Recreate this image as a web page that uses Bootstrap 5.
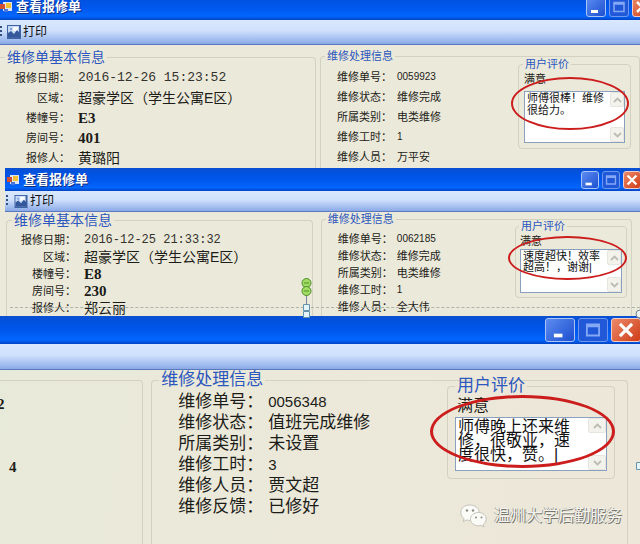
<!DOCTYPE html>
<html lang="zh-CN">
<head>
<meta charset="utf-8">
<meta name="viewport" content="width=device-width, initial-scale=1">
<title>查看报修单</title>
<link href="https://cdn.jsdelivr.net/npm/bootstrap@5.3.0/dist/css/bootstrap.min.css" rel="stylesheet">
<style>
body{font-family:"Liberation Sans","Noto Sans CJK SC",sans-serif;background:#ebe9da;color:#1c1c18;overflow-x:hidden}
.win{--fs:11px;--pitch:20px;--lg:14px;--btn:20px;background:#ebe9da;font-size:var(--fs);line-height:16px}
.titlebar{background:linear-gradient(#0a4fd0 0,#0053e2 25%,#0058ee 55%,#0366ff 85%,#0044c4 100%);color:#fff;font-size:13px;line-height:14px;font-weight:700}
.title-text{font-size:13px;font-weight:700;line-height:14px;text-shadow:1px 1px #0a2a80}
.ctl{width:var(--btn);height:var(--btnh,var(--btn));padding:0;border:1px solid #a9c4f8;border-radius:3px;background:linear-gradient(135deg,#5d8cf0,#1c4fd0);display:block}
.ctl svg{display:block;width:100%;height:100%}
.ctl.dim{background:#2158d8;border-color:#6d97ee}
.ctl.shut{background:linear-gradient(135deg,#ec8a6a,#cf3d17);border-color:#f3cdc4}
.tools{background:linear-gradient(#d9e8fe 0,#cfe0fc 45%,#9db9ee 85%,#8aa9e6 100%);border-bottom:1px solid #5a78bd}
.tool{padding:0;border:0;background:none;font-size:12px;line-height:16px;color:#111;gap:2px}
.grip{width:2px;height:12px;background:repeating-linear-gradient(#35507f 0 2px,transparent 2px 4px)}
.group{border:1px solid #d3d1c1;border-radius:4px;min-width:0;margin:0;padding:0}
.group.open-end{border-bottom:0;border-radius:4px 4px 0 0}
.group>legend{float:none;width:auto;margin:0 0 0 4px;padding:0 2px;font-size:var(--fs);line-height:var(--lg);color:#2d57bd}
.group>.big{font-size:14px;line-height:16px}
.pair{display:flex;height:var(--pitch);align-items:center;white-space:nowrap}
.pair dt{font-weight:400;flex:none;width:var(--key)}
.pair dd{margin:0}
.basic dt{text-align:right;margin-right:8px}
.stamp{font:13px/16px "Liberation Mono","Noto Sans CJK SC",monospace;color:#33332e}
.place{font-size:14px}
.code{font:bold 15px/16px "Liberation Serif",serif}
.num{font-size:var(--num,10px)}
.rating{margin-top:var(--lift)!important;padding:0 var(--in) var(--in)!important;width:var(--rw);flex:none;align-self:flex-start}
.rating>legend{margin-left:-1px}
.note{background:#fff;border:1px solid #8ba0bd;height:var(--nh)}
.note textarea{border:0;resize:none;outline:0;padding:var(--np,0) 0 0 2px;background:none;overflow:hidden;white-space:pre;font-size:var(--nf,var(--fs));line-height:var(--nl);width:0;flex:1;color:#111;font-family:inherit}
.arrow{border:1px solid #e6e5de;background:#f3f2ec;border-radius:2px;padding:0;width:var(--aw);height:15px;line-height:0}
.arrow svg{width:9px;height:6px}
.ring{position:absolute;left:var(--rl);right:var(--rr);top:var(--rt);bottom:var(--rb);border:var(--rs,2px) solid #cc1d1d;border-radius:50%;pointer-events:none}
.w1{--key:60px;--lift:-6px;--in:5px;--rw:113px;--nh:52px;--nl:12px;--aw:14px;--rl:-14px;--rr:-5px;--rt:-15px;--rb:12px}
.w1 .titlebar{margin-top:-6px;height:26px}
.w1 .winctl{margin-right:-12px;gap:3px}
.w1 .tools{height:25px;gap:5px}
.w1 .basic{--key:73px;padding-top:3px}
.w1 .left{margin-left:-4px}.w1 .left>legend{margin-left:8px}
.w2{--key:59px;--pitch:17px;--lift:-7px;--in:4px;--rw:112px;--nh:44px;--nl:11px;--np:1px;--aw:14px;--rl:-13px;--rr:-6px;--rt:-14px;--rb:12px;--btn:18px;margin-left:5px}
.w2 .titlebar{height:23px;padding-left:2px}
.w2 .winctl{margin-right:-1px;gap:3px}
.w2 .tools{height:21px;gap:6px;padding-left:1px}
.w2 .basic{--key:69px;padding-top:3px}
.w2 .stamp{font-size:12px}
.w2 .left{margin-left:1px}.w2 .left>legend{margin-left:5px}
.w2 .right{width:49%;margin-right:8px}
.w3{--fs:17px;--num:15px;--key:90px;--pitch:21px;--lg:16px;--lift:-10px;--in:7px;--rw:168px;--nh:54px;--nf:16px;--nl:14px;--np:2px;--aw:18px;--rl:-26px;--rr:-9px;--rt:-23px;--rb:2px;--rs:3px;--btn:30px;--btnh:24px;background:linear-gradient(100deg,#e8ead9,#ece8da 60%,#ece7d8)}
.w3 .titlebar{height:28px}
.w3 .winctl{margin-right:-1px;gap:3px}
.w3 .tools{height:26px}
.w3 .left{width:23%;margin:10px 0 0 -4px;padding-top:12px}
.w3 .right{margin:2px 12px 0 8px}
.w3 .right>legend{margin-left:7px}
.w3 .right dl{padding-left:26px;padding-top:3px}
.w3 .rating>legend{margin-left:0}
.w3 .rating{margin-right:12px}
.w3 .verdict{padding:3px 0 2px 2px;font-size:16px;line-height:18px}
.over{position:absolute;pointer-events:none}
.dash{left:5px;right:0;bottom:8px;border-top:1px dashed #aeb3ab}
.brand{position:absolute;right:18px;bottom:16px;gap:7px;font-size:16px;line-height:24px;color:#f4f3ee;text-shadow:1px 1px #77776f,-1px 0 #a3a39b}
.anchors{left:300px;top:-39px}
.knob{top:-8px}
.edge{top:146px}
</style>
<script src="https://cdn.jsdelivr.net/npm/bootstrap@5.3.0/dist/js/bootstrap.bundle.min.js"></script>
</head>
<body>
<svg width="0" height="0" class="position-absolute" aria-hidden="true">
<defs>
<symbol id="app" viewBox="0 0 12 12"><path fill="#dfe6f3" d="M3 1h9v9H3z"/><path fill="#d2502e" d="M0 3h5v5H0z"/><path fill="#f3c136" d="M6 2h5v5H6z"/><path fill="#4b77d6" d="M4 8h4v3H4z"/></symbol>
<symbol id="pic" viewBox="0 0 14 14"><path fill="#3e62a4" d="M0 0h14v14H0z"/><path fill="#c6daf8" d="M1 1h11v11H1z"/><path fill="#f9fbff" d="M6 2h5v4H6z"/><path fill="#35589b" d="M1 12V8l3-2 3 3 3-4 3 3v4z"/><path fill="#7fa3dc" d="M3 3h2v2H3z"/></symbol>
<symbol id="min" viewBox="0 0 18 18"><path fill="#fff" d="M4 12h7v3H4z"/></symbol>
<symbol id="max" viewBox="0 0 18 18"><path fill="none" stroke="#84a8f5" stroke-width="1.500" d="M4 4.500h10v9H4zM4 6h10"/></symbol>
<symbol id="cls" viewBox="0 0 18 18"><path stroke="#fff" stroke-width="2.500" d="M4 4l10 10M14 4L4 14"/></symbol>
<symbol id="up" viewBox="0 0 9 6"><path fill="none" stroke="#bdbdb4" stroke-width="1.800" d="M1 5l3.500-3.500L8 5"/></symbol>
<symbol id="dn" viewBox="0 0 9 6"><path fill="none" stroke="#bdbdb4" stroke-width="1.800" d="M1 1l3.500 3.500L8 1"/></symbol>
</defs>
</svg>
<main class="d-flex flex-column min-vh-100 position-relative overflow-hidden">

<section class="win w1">
<header class="titlebar d-flex align-items-center">
<svg width="12" height="14"><use href="#app"/></svg>
<h1 class="title-text mb-0 ms-1 me-auto">查看报修单</h1>
<div class="winctl d-flex">
<button class="ctl" aria-label="最小化"><svg><use href="#min"/></svg></button>
<button class="ctl dim" aria-label="最大化"><svg><use href="#max"/></svg></button>
<button class="ctl shut" aria-label="关闭"><svg><use href="#cls"/></svg></button>
</div>
</header>
<div class="tools d-flex align-items-center"><span class="grip"></span><button class="tool d-flex align-items-center"><svg width="14" height="14"><use href="#pic"/></svg>打印</button></div>
<div class="d-flex pt-1">
<fieldset class="group open-end left flex-fill me-1">
<legend class="big">维修单基本信息</legend>
<dl class="basic mb-0">
<div class="pair"><dt>报修日期：</dt><dd class="stamp">2016-12-26 15:23:52</dd></div>
<div class="pair"><dt>区域：</dt><dd class="place">超豪学区（学生公寓E区）</dd></div>
<div class="pair"><dt>楼幢号：</dt><dd class="code">E3</dd></div>
<div class="pair"><dt>房间号：</dt><dd class="code">401</dd></div>
<div class="pair"><dt>报修人：</dt><dd class="place">黄璐阳</dd></div>
</dl>
</fieldset>
<fieldset class="group open-end right w-50">
<legend>维修处理信息</legend>
<div class="d-flex justify-content-between pe-2">
<dl class="mb-0 ps-3 pt-1">
<div class="pair"><dt>维修单号：</dt><dd class="num">0059923</dd></div>
<div class="pair"><dt>维修状态：</dt><dd>维修完成</dd></div>
<div class="pair"><dt>所属类别：</dt><dd>电类维修</dd></div>
<div class="pair"><dt>维修工时：</dt><dd class="num">1</dd></div>
<div class="pair"><dt>维修人员：</dt><dd>万平安</dd></div>
</dl>
<fieldset class="group rating">
<legend>用户评价</legend>
<label class="verdict d-block pb-1" for="n1">满意</label>
<div class="note d-flex position-relative">
<textarea id="n1" spellcheck="false">师傅很棒！维修
很给力。</textarea>
<div class="d-flex flex-column justify-content-between"><button class="arrow" aria-label="向上"><svg><use href="#up"/></svg></button><button class="arrow" aria-label="向下"><svg><use href="#dn"/></svg></button></div>
<span class="ring"></span>
</div>
</fieldset>
</div>
</fieldset>
</div>
</section>

<section class="win w2 position-relative">
<header class="titlebar d-flex align-items-center">
<svg width="12" height="12"><use href="#app"/></svg>
<h2 class="title-text mb-0 ms-1 me-auto">查看报修单</h2>
<div class="winctl d-flex">
<button class="ctl" aria-label="最小化"><svg><use href="#min"/></svg></button>
<button class="ctl dim" aria-label="最大化"><svg><use href="#max"/></svg></button>
<button class="ctl shut" aria-label="关闭"><svg><use href="#cls"/></svg></button>
</div>
</header>
<div class="tools d-flex align-items-center"><span class="grip"></span><button class="tool d-flex align-items-center"><svg width="14" height="13"><use href="#pic"/></svg>打印</button></div>
<div class="d-flex">
<fieldset class="group open-end left flex-fill me-2">
<legend class="big">维修单基本信息</legend>
<dl class="basic mb-0">
<div class="pair"><dt>报修日期：</dt><dd class="stamp">2016-12-25 21:33:32</dd></div>
<div class="pair"><dt>区域：</dt><dd class="place">超豪学区（学生公寓E区）</dd></div>
<div class="pair"><dt>楼幢号：</dt><dd class="code">E8</dd></div>
<div class="pair"><dt>房间号：</dt><dd class="code">230</dd></div>
<div class="pair"><dt>报修人：</dt><dd class="place">郑云丽</dd></div>
</dl>
</fieldset>
<fieldset class="group open-end right">
<legend>维修处理信息</legend>
<div class="d-flex justify-content-between pe-1">
<dl class="mb-0 ps-3 pt-1">
<div class="pair"><dt>维修单号：</dt><dd class="num">0062185</dd></div>
<div class="pair"><dt>维修状态：</dt><dd>维修完成</dd></div>
<div class="pair"><dt>所属类别：</dt><dd>电类维修</dd></div>
<div class="pair"><dt>维修工时：</dt><dd class="num">1</dd></div>
<div class="pair"><dt>维修人员：</dt><dd>全大伟</dd></div>
</dl>
<fieldset class="group rating">
<legend>用户评价</legend>
<label class="verdict d-block" for="n2">满意</label>
<div class="note d-flex position-relative">
<textarea id="n2" spellcheck="false">速度超快！效率
超高！，谢谢|</textarea>
<div class="d-flex flex-column justify-content-between"><button class="arrow" aria-label="向上"><svg><use href="#up"/></svg></button><button class="arrow" aria-label="向下"><svg><use href="#dn"/></svg></button></div>
<span class="ring"></span>
</div>
</fieldset>
</div>
</fieldset>
</div>
<span class="over dash"></span>
</section>

<section class="win w3 flex-grow-1 d-flex flex-column position-relative">
<header class="titlebar d-flex align-items-center justify-content-end">
<div class="winctl d-flex">
<button class="ctl" aria-label="最小化"><svg><use href="#min"/></svg></button>
<button class="ctl dim" aria-label="最大化"><svg><use href="#max"/></svg></button>
<button class="ctl shut" aria-label="关闭"><svg><use href="#cls"/></svg></button>
</div>
</header>
<div class="tools"></div>
<div class="d-flex flex-grow-1">
<div class="group open-end left flex-shrink-0">
<div class="pair code">2</div>
<div class="pair"></div>
<div class="pair"></div>
<div class="pair code ps-2 ms-1">4</div>
</div>
<fieldset class="group open-end right flex-fill">
<legend>维修处理信息</legend>
<div class="d-flex justify-content-between">
<dl class="mb-0">
<div class="pair"><dt>维修单号：</dt><dd class="num">0056348</dd></div>
<div class="pair"><dt>维修状态：</dt><dd>值班完成维修</dd></div>
<div class="pair"><dt>所属类别：</dt><dd>未设置</dd></div>
<div class="pair"><dt>维修工时：</dt><dd class="num">3</dd></div>
<div class="pair"><dt>维修人员：</dt><dd>贾文超</dd></div>
<div class="pair"><dt>维修反馈：</dt><dd>已修好</dd></div>
</dl>
<fieldset class="group rating">
<legend>用户评价</legend>
<label class="verdict d-block" for="n3">满意</label>
<div class="note d-flex position-relative">
<textarea id="n3" spellcheck="false">师傅晚上还来维
修，很敬业，速
度很快，赞。|</textarea>
<div class="d-flex flex-column justify-content-between"><button class="arrow" aria-label="向上"><svg><use href="#up"/></svg></button><button class="arrow" aria-label="向下"><svg><use href="#dn"/></svg></button></div>
<span class="ring"></span>
</div>
</fieldset>
</div>
</fieldset>
</div>
<svg class="over anchors" width="14" height="44" viewBox="0 0 14 44"><path stroke="#75889a" d="M6.500 18v22"/><circle cx="6.500" cy="6" r="4.500" fill="#a2dc62" stroke="#4e8d2c"/><circle cx="6.500" cy="14" r="4.500" fill="#a2dc62" stroke="#4e8d2c"/><path stroke="#4e8d2c" d="M4 6h5M4 14h5"/><path fill="#e4f4fa" stroke="#6693ac" d="M3.500 27.500h6v6h-6zM3.500 34.500h6v6h-6z"/></svg>
<svg class="over knob end-0" width="5" height="12" viewBox="0 0 5 12"><circle cx="5" cy="6" r="4" fill="#eef4f6" stroke="#6d7f8a"/></svg>
<svg class="over edge end-0" width="4" height="9" viewBox="0 0 4 9"><path fill="#e4f4fa" stroke="#6693ac" d="M.5.5h7v7h-7z"/></svg>
<div class="brand d-flex align-items-center">
<svg width="27" height="24" viewBox="0 0 27 24"><g stroke="#b9b8ae" stroke-width=".8" fill="#fbfbf8"><path d="M10 1C4.500 1 .8 4.400.8 8.700c0 2.500 1.300 4.600 3.300 6l-.8 3 3.300-1.800c1 .3 2.200.5 3.400.5 5.200 0 9.200-3.400 9.200-7.700S15.200 1 10 1z"/><path d="M18.500 8.500c-4.500 0-8 3-8 6.700s3.500 6.600 8 6.600c1 0 1.900-.1 2.700-.4l2.700 1.500-.7-2.500c1.900-1.200 3-3 3-5.200 0-3.700-3.300-6.700-7.700-6.700z"/></g><g fill="#8d8d84"><circle cx="7" cy="6.500" r="1.200"/><circle cx="13" cy="6.500" r="1.200"/><circle cx="16" cy="13.500" r="1"/><circle cx="21.500" cy="13.500" r="1"/></g></svg>
<span>温州大学后勤服务</span>
</div>
</section>
</main>
</body>
</html>
